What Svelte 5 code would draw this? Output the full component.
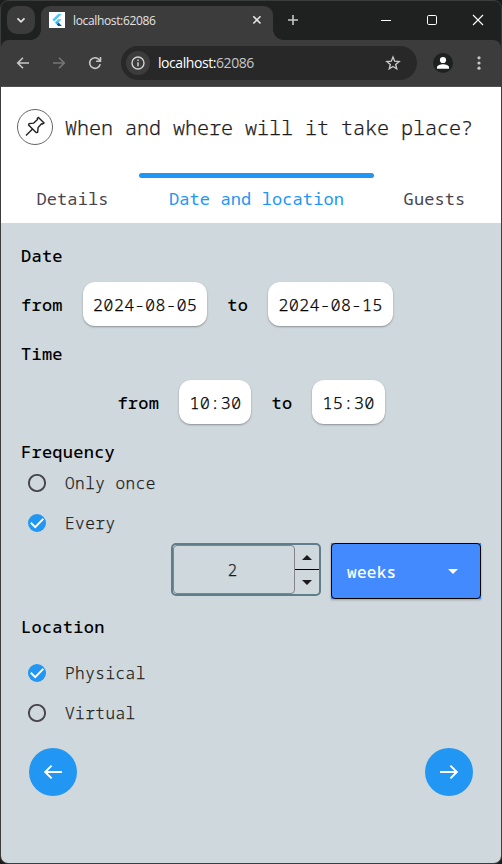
<script>
  let frequency = $state('Every');
  let location = $state('Physical');
  const tabs = ['Details', 'Date and location', 'Guests'];
</script>

{#snippet radio(label, selected, pick)}
  <button class="option" onclick={pick}>
    <svg width="18" height="18" viewBox="0 0 18 18">
      {#if selected}
        <circle cx="9" cy="9" r="9" fill="#2196f3" />
        <path d="M2.8 8.8 7.2 13.1 15.3 4.9" fill="none" stroke="#fff" stroke-width="2" />
      {:else}
        <circle cx="9" cy="9" r="8.1" fill="none" stroke="#49454f" stroke-width="1.9" />
      {/if}
    </svg>
    <span>{label}</span>
  </button>
{/snippet}

<div class="window">
  <div class="strip">
    <div class="menu">
      <svg width="28" height="28" viewBox="0 0 28 28"><path d="M10.5 12.3 14 15.8l3.5-3.5" fill="none" stroke="#e3e3e3" stroke-width="1.7" /></svg>
    </div>
    <div class="tab">
      <svg class="logo" width="16" height="16" viewBox="0 0 16 16">
        <path fill="#fff" d="M0 0h16v16H0z" />
        <path d="M9.1 2h3.7L5.2 9.6 3.3 7.8z" fill="#54c5f8" />
        <path d="M9.1 7.3h3.7L9.5 10.6 7.6 8.8z" fill="#54c5f8" />
        <path d="m5.9 10.6 1.9-1.8 1.8 1.8-1.8 1.9z" fill="#29b6f6" />
        <path d="m7.8 12.5 1.8-1.9 3.2 3.3H9.1z" fill="#01579b" />
      </svg>
      <span>localhost:62086</span>
      <svg class="close" width="10" height="10" viewBox="0 0 10 10"><path d="m1.3 1.3 7.2 7.2m0-7.2L1.3 8.5" stroke="#e3e3e3" stroke-width="1.6" /></svg>
    </div>
    <svg class="plus" width="12" height="12" viewBox="0 0 12 12"><path d="M1 6h10M6 1v10" stroke="#c7c7c7" stroke-width="1.6" /></svg>
    <div class="controls">
      <svg width="12" height="12" viewBox="0 0 12 12"><path d="M1 6.5h10" stroke="#fff" /></svg>
      <svg width="12" height="12" viewBox="0 0 12 12"><rect x="1.5" y="1.5" width="9" height="9" rx="1.2" fill="none" stroke="#fff" /></svg>
      <svg width="12" height="12" viewBox="0 0 12 12"><path d="m1 1 10 10m0-10L1 11" stroke="#fff" stroke-width="1.1" /></svg>
    </div>
  </div>

  <div class="toolbar">
    <div class="nav">
      <svg width="14" height="14" viewBox="0 0 14 14"><path d="M13 7H2M7 1.7 1.7 7 7 12.3" fill="none" stroke="#c7c7c7" stroke-width="1.6" /></svg>
      <svg width="14" height="14" viewBox="0 0 14 14"><path d="M1 7h11M7 1.7 12.3 7 7 12.3" fill="none" stroke="#757575" stroke-width="1.6" /></svg>
      <svg width="14" height="14" viewBox="0 0 14 14"><path d="M12.2 8.1A5.3 5.3 0 1 1 11 3.5l1 1.1M12.5 1v4.3H8.1" fill="none" stroke="#c7c7c7" stroke-width="1.6" /></svg>
    </div>
    <div class="address">
      <div class="info">
        <svg width="14" height="14" viewBox="0 0 14 14"><circle cx="7" cy="7" r="6" fill="none" stroke="#d0d0d0" stroke-width="1.4" /><path d="M7 6.2v4M7 3.6v1.5" stroke="#d0d0d0" stroke-width="1.5" /></svg>
      </div>
      <span class="url">localhost:<i>62086</i></span>
      <svg class="star" width="16" height="16" viewBox="0 0 16 16"><path d="m8 2.1 1.7 4.1 4.4.4-3.4 2.9 1 4.3L8 11.5l-3.7 2.3 1-4.3-3.4-2.9 4.4-.4z" fill="none" stroke="#c7c7c7" stroke-width="1.4" /></svg>
    </div>
    <svg class="profile" width="20" height="20" viewBox="0 0 20 20"><circle cx="10" cy="10" r="10" fill="#1f2020" /><circle cx="10" cy="7" r="3.1" fill="#fff" /><path d="M4 15.8v-1.5c0-2 3.5-3 6-3s6 1 6 3v1.5z" fill="#fff" /></svg>
    <svg class="dots" width="4" height="16" viewBox="0 0 4 16"><g fill="#c7c7c7"><circle cx="2" cy="2.8" r="1.6" /><circle cx="2" cy="8" r="1.6" /><circle cx="2" cy="13.2" r="1.6" /></g></svg>
  </div>

  <header>
    <div class="heading">
      <svg width="36" height="36" viewBox="0 0 36 36">
        <circle cx="18" cy="18" r="17.5" fill="#fff" stroke="#555" stroke-width=".9" />
        <path d="m21.5 8.5 5.5 5.5-1.4 1-1.1-.2-3.4 3.8-.5 4.8-1.5.2-7.5-7.5.5-1.5 4.6-.5 3.8-3.6-.2-1.1zM15.5 20l-6.5 6.6" fill="none" stroke="#222" stroke-width="1.4" />
      </svg>
      <h1>When and where will it take place?</h1>
    </div>
    <nav>
      {#each tabs as tab, i}
        <button class:active={i === 1}>{tab}</button>
      {/each}
    </nav>
  </header>

  <main>
    <h2>Date</h2>
    <div class="range">
      <b>from</b><button class="chip">2024-08-05</button><b>to</b><button class="chip">2024-08-15</button>
    </div>
    <h2>Time</h2>
    <div class="range centered">
      <b>from</b><button class="chip">10:30</button><b>to</b><button class="chip">15:30</button>
    </div>
    <h2>Frequency</h2>
    {@render radio('Only once', frequency === 'Only once', () => (frequency = 'Only once'))}
    {@render radio('Every', frequency === 'Every', () => (frequency = 'Every'))}
    <div class="interval">
      <div class="stepper">
        <div class="amount">2</div>
        <div class="arrows">
          <div><svg width="10" height="5" viewBox="0 0 10 5"><path d="M0 5 5 0l5 5z" fill="#1d1b20" /></svg></div>
          <div><svg width="10" height="5" viewBox="0 0 10 5"><path d="m0 0 5 5 5-5z" fill="#1d1b20" /></svg></div>
        </div>
      </div>
      <div class="unit">
        <button>
          <span>weeks</span>
          <svg width="10" height="5" viewBox="0 0 10 5"><path d="m0 0 5 5 5-5z" fill="#fff" /></svg>
        </button>
      </div>
    </div>
    <h2 class="place">Location</h2>
    {@render radio('Physical', location === 'Physical', () => (location = 'Physical'))}
    {@render radio('Virtual', location === 'Virtual', () => (location = 'Virtual'))}
    <footer>
      <button aria-label="Back"><svg width="20" height="16" viewBox="0 0 20 16"><path d="M19 8H2.5M8.6 1.6 2.2 8l6.4 6.4" fill="none" stroke="#fff" stroke-width="2" /></svg></button>
      <button aria-label="Next"><svg width="20" height="16" viewBox="0 0 20 16"><path d="M1 8h16.5M11.4 1.6 17.8 8l-6.4 6.4" fill="none" stroke="#fff" stroke-width="2" /></svg></button>
    </footer>
  </main>
</div>

<style>
  :global(body) { background: #1b1c1c; }
  * { box-sizing: border-box; }
  button { border: 0; padding: 0; margin: 0; background: none; font: inherit; color: inherit; letter-spacing: inherit; }
  svg { display: block; flex: none; }
  .window {
    width: 502px; height: 864px; display: flex; flex-direction: column; overflow: hidden;
    border: 1px solid #3c3c3c; border-radius: 8px; background: #1f2020;
    font-family: "Noto Sans Mono", "DejaVu Sans Mono", monospace; font-weight: 300;
  }
  .strip { height: 39px; display: flex; padding: 5px 0 0 6px; flex: none; }
  .menu { width: 28px; height: 28px; border-radius: 10px; background: #3c3c3c; }
  .tab {
    position: relative; display: flex; align-items: center; width: 232px; height: 34px; margin-left: 6px;
    padding: 0 11px 6px 8px; border-radius: 9px 9px 0 0; background: #3c3c3c;
    font: 12px "Open Sans", sans-serif; letter-spacing: -.35px; color: #e3e3e3;
  }
  .tab::before, .tab::after { content: ""; position: absolute; bottom: 0; width: 10px; height: 10px; }
  .tab::before { left: -10px; background: radial-gradient(circle at 0 0, transparent 9.5px, #3c3c3c 10px); }
  .tab::after { right: -10px; background: radial-gradient(circle at 100% 0, transparent 9.5px, #3c3c3c 10px); }
  .tab span { margin-left: 8px; }
  .close { margin-left: auto; }
  .plus { margin: 8px 0 0 14px; }
  .controls { display: flex; gap: 34px; margin: 8px 0 0 auto; padding-right: 17px; }
  .toolbar { height: 47px; flex: none; display: flex; align-items: center; background: #3c3c3c; border-bottom: 1px solid #505050; border-radius: 8px 8px 0 0; padding: 0 20px 0 15px; }
  .nav { display: flex; gap: 22px; }
  .address { display: flex; align-items: center; width: 296px; height: 34px; margin-left: 19px; padding: 0 16px 0 5px; border-radius: 17px; background: #282828; font: 14px "Open Sans", sans-serif; letter-spacing: -.43px; color: #fff; }
  .info { width: 24px; height: 24px; border-radius: 12px; background: #3c3c3c; display: flex; align-items: center; justify-content: center; }
  .url { margin: -1px 0 0 8px; }
  .url i { font-style: normal; color: #c7c7c7; }
  .star { margin-left: auto; }
  .profile { margin-left: 16px; }
  .dots { margin-left: auto; }
  header { height: 136px; flex: none; background: #fff; padding-top: 22px; }
  .heading { display: flex; align-items: center; height: 36px; padding-left: 16px; gap: 12px; color: #1d1b20; }
  h1 { margin: 2px 0 0; font-size: 20px; font-weight: 300; -webkit-text-stroke: .25px; line-height: 28px; letter-spacing: 0; white-space: nowrap; }
  nav { display: flex; height: 50px; margin-top: 28px; color: #49454f; font-size: 17px; font-weight: 400; letter-spacing: .1px; }
  nav button { position: relative; width: 134px; padding: 1px 0 0 8px; white-space: nowrap; }
  nav button:first-child { width: 138px; padding-left: 5px; }
  nav .active { width: 235px; padding: 1px 0 0; color: #2196f3; }
  nav button:last-child { width: 127px; padding-left: 0; padding-right: 6px; }
  nav .active::before { content: ""; position: absolute; left: 0; right: 0; top: 0; height: 5px; border-radius: 3px; background: #2196f3; }
  main { flex: 1; background: #cfd8dd; padding: 5px 20px 0; color: #000; font-size: 17px; letter-spacing: .25px; }
  h2 { margin: 17px 0 15px; height: 22px; line-height: 22px; font-size: 17px; font-weight: 500; }
  h2:nth-of-type(3) { margin-bottom: 0; }
  .range { display: flex; align-items: center; gap: 20px; height: 44px; }
  .range b { font-weight: 500; padding-top: 1px; }
  .centered { justify-content: center; }
  .chip { height: 44px; padding: 0 10px; border-radius: 12px; background: #fff; box-shadow: 0 1px 2px #0005; white-space: nowrap; -webkit-text-stroke: .25px; }
  .option { display: flex; align-items: center; gap: 19px; height: 40px; padding-left: 7px; font-size: 16px; letter-spacing: .5px; color: #1d1b20; -webkit-text-stroke: .25px; }
  .interval { display: flex; justify-content: flex-end; gap: 10px; height: 56px; }
  .stepper { display: flex; width: 150px; height: 53px; border: 2px solid #607d8b; border-radius: 5px; font-size: 16px; color: #1d1b20; -webkit-text-stroke: .25px; }
  .amount { width: 122px; border: 1px solid #85838a; border-radius: 4px; display: flex; align-items: center; justify-content: center; padding-right: 3px; }
  .arrows { flex: 1; display: flex; flex-direction: column; }
  .arrows div { flex: 1; display: flex; align-items: center; justify-content: center; }
  .arrows div + div { border-top: 1px solid #000; }
  .unit { width: 150px; height: 56px; background: #448aff; box-shadow: 0 1px 2px #0004; }
  .unit button { width: 150px; height: 56px; border: 1px solid #000; border-radius: 4px; padding: 2px 22px 0 15px; display: flex; align-items: center; justify-content: space-between; color: #fff; font-size: 16px; font-weight: 500; letter-spacing: .3px; }
  .unit svg { margin-top: -2px; }
  .place { margin-bottom: 15px !important; }
  footer { display: flex; justify-content: space-between; padding: 15px 8px 0; }
  footer button { width: 48px; height: 48px; border-radius: 24px; background: #2196f3; display: flex; align-items: center; justify-content: center; }
</style>
